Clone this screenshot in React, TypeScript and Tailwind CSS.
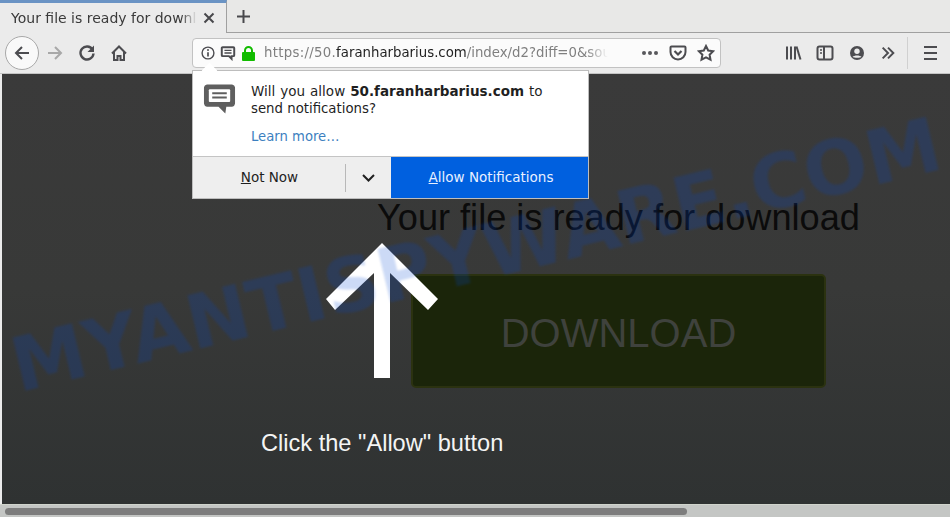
const uiFont = "font-['DejaVu_Sans',sans-serif]";
const pageFont = "font-['Liberation_Sans',Arial,sans-serif]";

const ToolbarIcon = ({ children, size = 18 }: { children: React.ReactNode; size?: number }) => (
  <svg width={size} height={size} viewBox="0 0 18 18" fill="none" stroke="#4c4c50" strokeWidth="2" className="shrink-0">
    {children}
  </svg>
);

const TabBar = () => (
  <div className="flex h-[33px] items-stretch bg-[#e8e8e7]">
    <div className="flex w-[227px] items-center border-r border-[#a0a0a0] border-t-[3px] border-t-[#6a93c4] bg-[#ebebeb] pl-[11px] pr-[6px]">
      <span className="w-[186px] overflow-hidden whitespace-nowrap text-[14px] text-[#3a3a3a] [mask-image:linear-gradient(to_right,black_170px,transparent_186px)]">
        Your file is ready for download
      </span>
      <svg width="12" height="12" viewBox="0 0 12 12" stroke="#48484c" strokeWidth="2" className="ml-[6px]">
        <path d="M1.5 1.5l9 9M10.5 1.5l-9 9" />
      </svg>
    </div>
    <div className="flex flex-1 items-center border-b border-[#a0a0a0] pl-[9px]">
      <svg width="15" height="15" viewBox="0 0 15 15" stroke="#48484c" strokeWidth="2">
        <path d="M7.5 1v13M1 7.5h13" />
      </svg>
    </div>
  </div>
);

const NavBar = () => (
  <div className="flex h-[41px] items-center border-b border-[#c4c4c4] bg-[#ebebeb] pl-[5px]">
    <div className="flex h-[34px] w-[34px] items-center justify-center rounded-full border border-[#a8a8a8] bg-[#f9f9f9]">
      <ToolbarIcon>
        <path d="M16 9H3M9 3L3 9l6 6" />
      </ToolbarIcon>
    </div>
    <div className="ml-[7px]">
      <ToolbarIcon>
        <path stroke="#a8a8a8" d="M2 9h13M9 3l6 6-6 6" />
      </ToolbarIcon>
    </div>
    <div className="ml-[14px]">
      <ToolbarIcon>
        <path strokeWidth="2.4" d="M14.5 5.5A6.5 6.5 0 1 0 15.5 9.5" />
        <path fill="#4c4c50" stroke="none" d="M16 1.5V8H9.5z" />
      </ToolbarIcon>
    </div>
    <div className="ml-[14px]">
      <ToolbarIcon>
        <path d="M2 9.5L9 2.5l7 7M4 8v8h3.5v-4h3v4H14V8" />
      </ToolbarIcon>
    </div>
    <div className="ml-[64px] flex h-[30px] w-[529px] items-center rounded-[4px] border border-[#c2c2c2] bg-[#fbfbfb] pl-[8px]">
      <ToolbarIcon size={14}>
        <circle cx="9" cy="9" r="7.6" strokeWidth="1.8" />
        <path d="M9 8v5.5" strokeWidth="2.2" />
        <circle cx="9" cy="5" r="1.3" fill="#4c4c50" stroke="none" />
      </ToolbarIcon>
      <div className="ml-[5px]">
        <ToolbarIcon size={16}>
          <path strokeWidth="2.2" d="M3 2.5h12a1 1 0 0 1 1 1v8a1 1 0 0 1-1 1h-2v3l-3-3H3a1 1 0 0 1-1-1v-8a1 1 0 0 1 1-1z" />
          <path strokeWidth="1.5" d="M5 6h8M5 9h8" />
        </ToolbarIcon>
      </div>
      <svg width="13" height="15" viewBox="0 0 13 15" className="ml-[6px] shrink-0">
        <rect x="0" y="6" width="13" height="9" rx="1" fill="#12bc00" />
        <path d="M3 7V4.5a3.5 3.5 0 0 1 7 0V7" fill="none" stroke="#12bc00" strokeWidth="2" />
      </svg>
      <div className="ml-[9px] w-[368px] overflow-hidden whitespace-nowrap text-[13.3px] text-[#7f7f7f] [mask-image:linear-gradient(to_right,black_322px,transparent_344px)]">
        <span className="tracking-[0.3px]">https://50.</span>
        <span className="text-[#1f1f1f]">faranharbarius.com</span>/index/d2?diff=0&amp;source=abc
      </div>
      <div className="ml-[10px] flex gap-[2px]">
        <span className="h-[4px] w-[4px] rounded-full bg-[#58585c]" />
        <span className="h-[4px] w-[4px] rounded-full bg-[#58585c]" />
        <span className="h-[4px] w-[4px] rounded-full bg-[#58585c]" />
      </div>
      <div className="ml-[11px]">
        <ToolbarIcon>
          <path d="M2.5 2.5h13a1 1 0 0 1 1 1V8a7.5 7.5 0 0 1-15 0V3.5a1 1 0 0 1 1-1z" />
          <path d="M5.5 7l3.5 3.5L12.5 7" strokeWidth="2.2" />
        </ToolbarIcon>
      </div>
      <div className="ml-[10px]">
        <ToolbarIcon>
          <path d="M9 2l2.2 4.5 5 .7-3.6 3.5.9 5L9 13.3 4.5 15.7l.9-5L1.8 7.200l5-.7z" />
        </ToolbarIcon>
      </div>
    </div>
    <div className="ml-[63px]">
      <ToolbarIcon>
        <path d="M3 2.500v13M7 2.500v13M11 2.500v13" />
        <path d="M12.500 2.500l4 13" />
      </ToolbarIcon>
    </div>
    <div className="ml-[14px]">
      <ToolbarIcon>
        <rect x="1.500" y="2.500" width="15" height="13" rx="2" />
        <path d="M8 2.500v13" />
        <path d="M4 6h2M4 9h2" strokeWidth="1.300" />
      </ToolbarIcon>
    </div>
    <div className="ml-[15px]">
      <svg width="16" height="16" viewBox="0 0 16 16" className="shrink-0">
        <circle cx="8" cy="8" r="7" fill="#4c4c50" />
        <circle cx="8" cy="6.300" r="2.700" fill="#ebebeb" />
        <path d="M3.500 12c1.500-2 7.500-2 9 0-1 1-7.500 1-9 0z" fill="#ebebeb" />
      </svg>
    </div>
    <div className="ml-[15px]">
      <ToolbarIcon size={16}>
        <path strokeWidth="2.200" d="M3 3l6 6-6 6M9 3l6 6-6 6" />
      </ToolbarIcon>
    </div>
    <div className="ml-[11px] h-[32px] w-px bg-[#d0d0d0]" />
    <div className="ml-[14px]">
      <ToolbarIcon>
        <path d="M2 3h13M2 9h13M2 15h13" />
      </ToolbarIcon>
    </div>
  </div>
);

const PermissionPopup = () => (
  <div className="absolute left-[190px] top-[-4px] z-20 h-[129px] w-[397px] border border-[#bdbdbd] bg-white text-[13.5px] text-[#1f1f1f]">
    <div className="absolute left-[11px] top-[-6px] h-[11px] w-[11px] rotate-45 bg-white" />
    <div className="relative flex h-[85px] pl-[10px] pt-[11px]">
      <svg width="33" height="32" viewBox="0 0 34 32" className="mt-px shrink-0">
        <path d="M4 1h26a3.500 3.500 0 0 1 3 3v17a3.500 3.500 0 0 1-3 3h-6l-1 7-7-7H4a3.500 3.500 0 0 1-3-3V4a3.500 3.500 0 0 1 3-3z" fill="#5f5f5f" />
        <rect x="6" y="6" width="22" height="13" rx="1" fill="#fff" />
        <path d="M9.500 10h15M9.500 14.500h15" stroke="#5f5f5f" strokeWidth="2" />
      </svg>
      <div className="ml-[15px] whitespace-nowrap leading-[18px]">
        <div className="[word-spacing:0.7px]">
          Will you allow <b>50.faranharbarius.com</b> to
        </div>
        <div className="text-[13.3px]">send notifications?</div>
        <div className="mt-[10px] text-[13.2px] text-[#3c7fc0]">Learn more…</div>
      </div>
    </div>
    <div className="flex h-[42px] border-t border-[#c4c4c4]">
      <div className="flex w-[152px] items-center justify-center bg-[#eeeeee] pl-[1px]">
        <span>
          <span className="underline">N</span>ot Now
        </span>
      </div>
      <div className="flex w-[46px] items-center bg-[#eeeeee]">
        <div className="h-[28px] w-px bg-[#b8b8b8]" />
        <div className="flex flex-1 justify-center">
          <svg width="13" height="8" viewBox="0 0 13 8" fill="none" stroke="#1f1f1f" strokeWidth="2">
            <path d="M1 1l5.500 5.500L12 1" />
          </svg>
        </div>
      </div>
      <div className="flex flex-1 items-center justify-center bg-[#0060df] pl-[3px] text-[#e8f0ff]">
        <span>
          <span className="underline">A</span>llow Notifications
        </span>
      </div>
    </div>
  </div>
);

const BigArrow = () => (
  <svg width="116" height="140" viewBox="0 0 116 140" fill="#fff" className="absolute left-[323px] top-[168px] z-0">
    <path d="M57 1L113 57 103 68 65 31V136H49V31L10 68 1 57z" />
  </svg>
);

export default function App() {
  return (
    <div className={`flex h-[517px] w-[950px] flex-col overflow-hidden bg-[#ebebeb] ${uiFont}`}>
      <TabBar />
      <NavBar />
      <div className="relative ml-[2px] flex-1 bg-gradient-to-b from-[#3a3a3a] via-[#383938] to-[#2f3232]">
        <div className={`pl-[375px] pt-[124px] ${pageFont}`}>
          <h1 className="whitespace-nowrap text-[36.15px] leading-[40px] text-[#0b0b0b]">Your file is ready for download</h1>
          <div className="ml-[34px] mt-[36px] flex h-[114px] w-[415px] items-center justify-center rounded-[5px] border-2 border-[#2b3210] bg-[#1b250a] pt-[3px] text-[40px] text-[#3f423d]">
            DOWNLOAD
          </div>
        </div>
        <BigArrow />
        <div className={`absolute left-[259px] top-[354px] text-[23.6px] leading-[30px] text-[#f4f4f4] ${pageFont}`}>
          Click the "Allow" button
        </div>
        <PermissionPopup />
        <div className="pointer-events-none absolute left-[-26px] top-[144px] z-10 w-[1000px] -rotate-[13.6deg] whitespace-nowrap text-center text-[75px] font-bold leading-none text-[#0048d0]/20 blur-[0.8px]">
          MYANTISPYWARE.COM
        </div>
      </div>
      <div className="flex h-[13px] items-center border-t border-[#d0d4cc] bg-[#c4c6c4] pl-[5px]">
        <div className="h-[7px] w-[682px] rounded-full bg-[#7d7d7d]" />
      </div>
    </div>
  );
}
